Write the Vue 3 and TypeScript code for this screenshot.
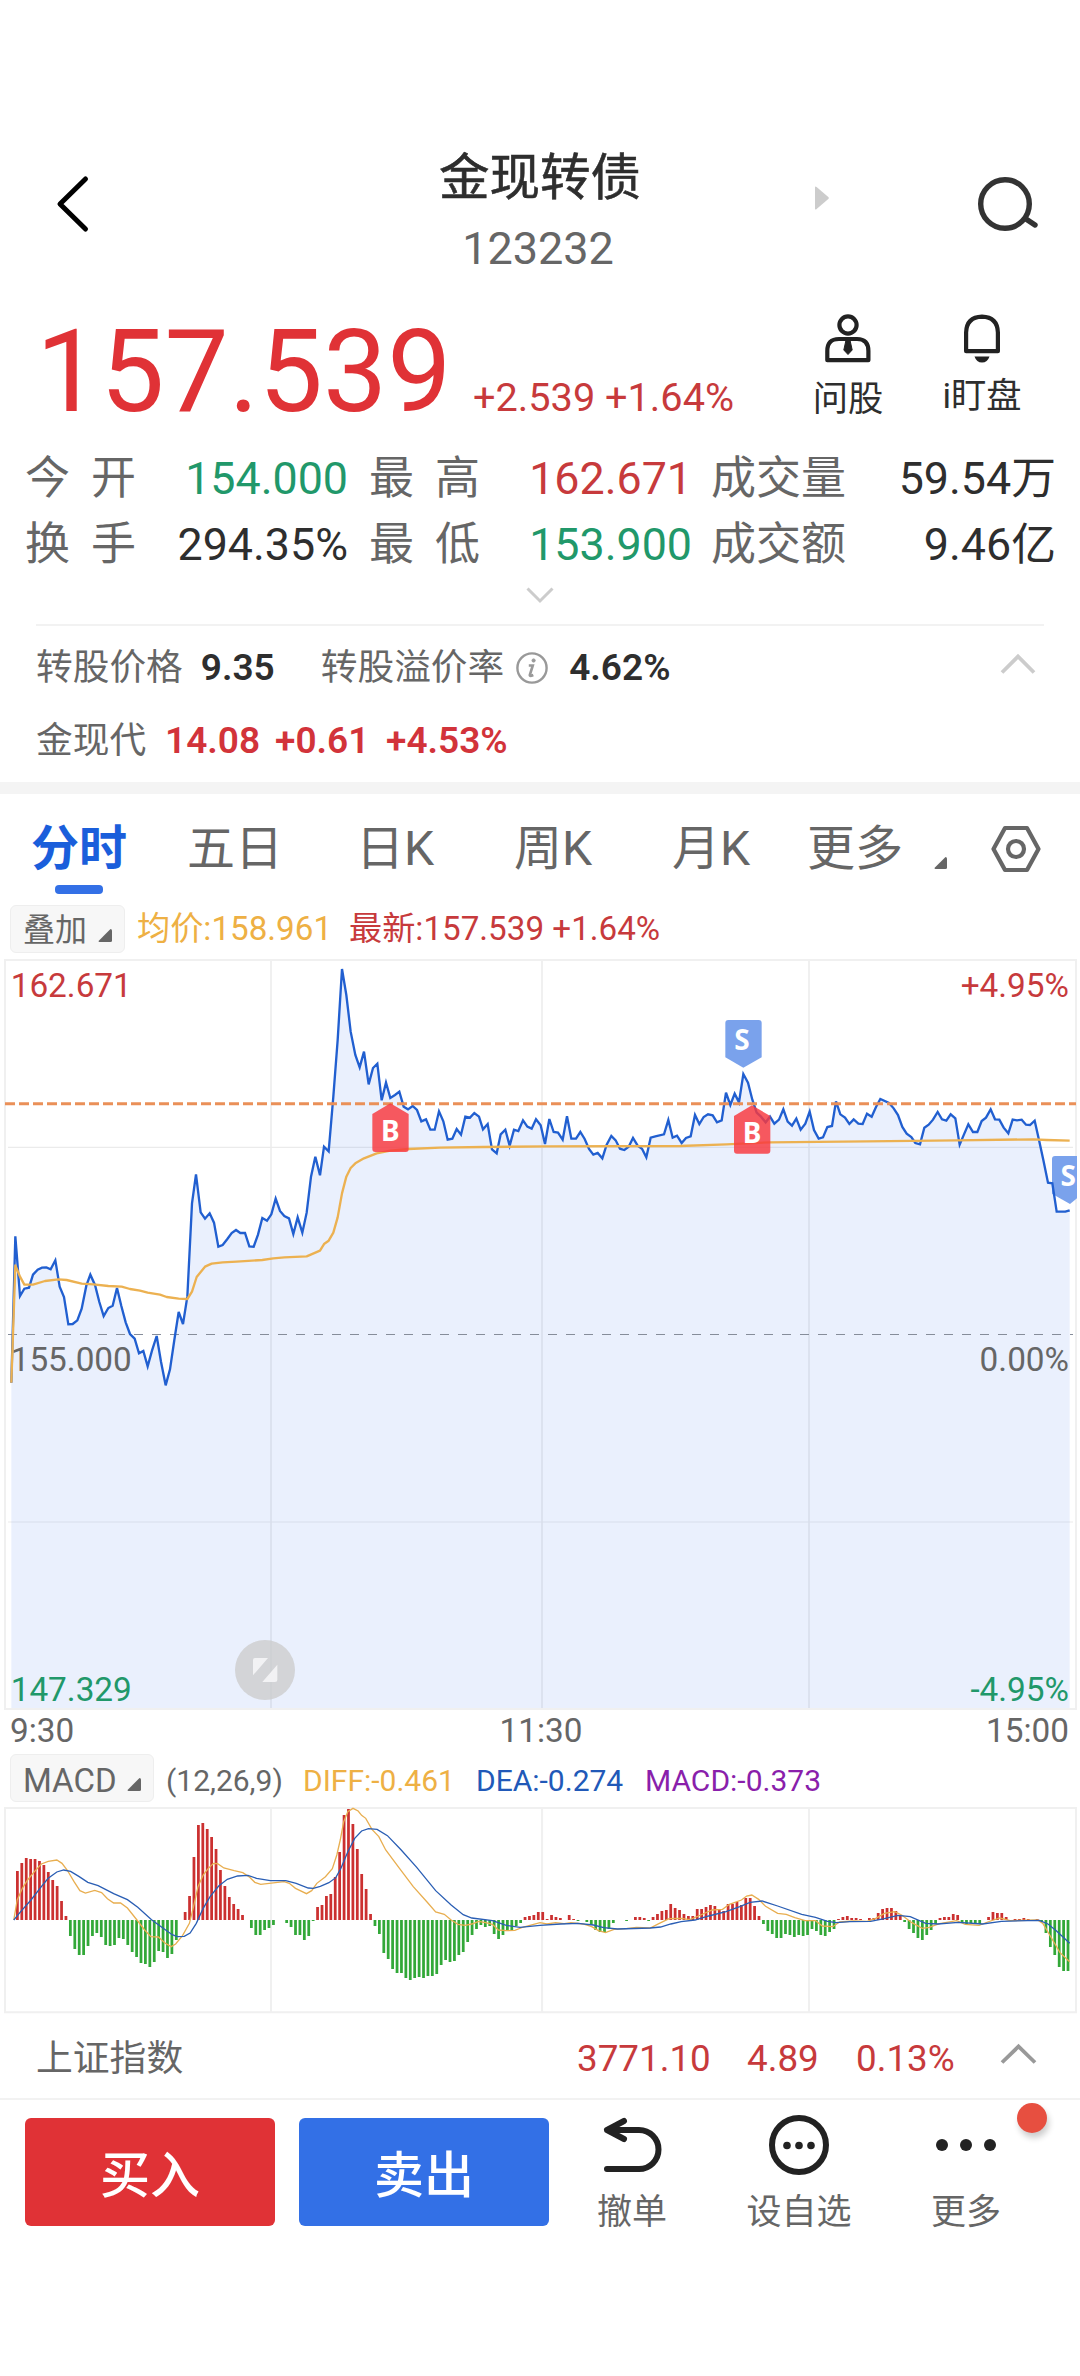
<script setup lang="ts">
interface Quote {
  label: string
  value: string
  tone: 'up' | 'down' | 'flat'
}

const quoteColumns: Quote[][] = [
  [
    { label: '今开', value: '154.000', tone: 'down' },
    { label: '换手', value: '294.35%', tone: 'flat' },
  ],
  [
    { label: '最高', value: '162.671', tone: 'up' },
    { label: '最低', value: '153.900', tone: 'down' },
  ],
  [
    { label: '成交量', value: '59.54万', tone: 'flat' },
    { label: '成交额', value: '9.46亿', tone: 'flat' },
  ],
]

const tabs: string[] = ['分时', '五日', '日K', '周K', '月K', '更多']

// Intraday price, chart units (three per pixel)
const price =
  '34,1328 46,889 60,1068 73,1046 87,1043 99,1004 113,989 126,983 139,982 152,988 166,961 179,1040 192,1071 205,1153 218,1152 232,1141 245,1106 259,1037 271,1004 285,1035 298,1086 311,1128 325,1104 338,1097 351,1044 364,1098 377,1147 390,1182 404,1196 417,1240 430,1233 443,1279 456,1232 470,1188 483,1265 497,1336 510,1288 523,1200 536,1116 549,1152 562,1070 576,790 588,703 602,817 615,836 629,820 642,848 655,920 668,915 682,897 695,879 708,870 721,879 735,879 748,919 761,920 774,884 787,834 801,842 814,823 827,776 840,813 853,828 867,835 880,882 893,832 907,878 920,818 933,710 946,650 960,706 972,620 986,634 1000,470 1013,300 1026,87 1039,165 ' +
  '1052,275 1066,345 1079,382 1092,335 1106,433 1119,384 1132,371 1145,481 1158,428 1171,474 1185,465 1198,455 1211,500 1224,508 1238,498 1251,510 1264,544 1278,538 1291,569 1304,569 1317,514 1330,544 1343,599 1357,596 1370,567 1383,584 1396,530 1410,533 1423,519 1437,530 1449,568 1463,552 1476,628 1490,640 1502,583 1516,569 1529,617 1542,569 1555,573 1569,541 1582,560 1595,566 1608,538 1622,556 1635,612 1648,537 1661,576 1674,578 1688,599 1701,529 1714,596 1728,596 1741,576 1754,597 1767,627 1780,644 1793,639 1807,655 1820,614 1834,588 1847,601 1860,626 1873,630 1886,620 1899,594 1913,617 1926,626 1939,652 1952,593 1966,589 1992,583 2005,540 2018,593 2031,587 2045,609 2058,594 2072,589 ' +
  '2085,525 2098,552 2111,531 2124,523 2138,526 2151,547 2165,541 2178,458 2191,495 2204,461 2217,487 2230,402 2244,428 2257,479 2270,518 2283,530 2297,547 2310,530 2323,551 2337,539 2350,508 2363,545 2376,557 2389,536 2402,569 2416,551 2429,515 2442,570 2456,596 2469,592 2482,561 2496,558 2508,484 2521,523 2535,533 2548,552 2561,538 2575,551 2588,552 2601,521 2615,530 2628,501 2641,477 2667,489 2681,505 2694,525 2707,561 2720,581 2734,591 2746,609 2760,613 2773,563 2786,554 2799,539 2813,516 2826,538 2839,542 2852,523 2866,535 2879,614 2892,583 2905,553 2919,576 2932,576 2945,543 2958,533 2972,508 2985,538 2998,539 3011,563 3025,580 3038,539 3051,541 3065,539 3078,554 3090,555 3104,542 3117,600 3130,660 3144,728 3157,730 3170,815 3196,815 3209,811'

const priceArea = `${price} 3209,2304 34,2304`

const average =
  '34,1328 46,976 60,1010 73,1034 99,1034 135,1023 175,1018 200,1020 245,1031 280,1033 325,1038 365,1040 390,1047 420,1052 443,1058 480,1064 500,1071 536,1076 562,1077 576,1055 590,1011 615,980 635,971 668,967 710,965 787,960 820,955 853,952 920,949 960,932 973,911 986,902 1000,878 1013,832 1026,760 1039,710 1052,684 1066,670 1092,655 1130,640 1171,632 1226,627 1320,623 1450,621 1640,619 2040,618 2180,613 2310,607 2600,604 2870,601 3100,598 3140,600 3209,602'

// MACD histogram, one value per minute
const histogram: number[] = [
  0, 147, 171, 186, 183, 183, 177, 165, 144, 120, 102, 57, 12,
  -48, -87, -105, -105, -78, -48, -39, -51, -75, -78, -75, -54, -57, -75, -96, -111, -129, -132, -141, -126, -93, -96, -114, -102, -60,
  0, 24, 72, 189, 285, 291, 273, 249, 213, 150, 102, 69, 48, 33, 15,
  0, -24, -45, -45, -30, -24, -15, 0, 0, -9, -21, -45, -45, -60, -48, -3,
  39, 45, 72, 78, 129, 204, 315, 333, 288, 213, 138, 93, 18,
  -18, -42, -99, -117, -147, -159, -159, -174, -180, -174, -171, -174, -168, -168, -162, -135, -120, -126, -123, -105, -96, -66, -45, -27, -15, -21, -18, -42, -57, -45, -30, -33, -18, -9,
  9, 12, 15, 24, 24, 3, 15, 9, 6, 0, 15, 3, -3, 0, -6, -15, -30, -36, -36, -27, -9, 0, 0, -3, 0,
  9, 9, 6, -3, 9, 18, 27, 30, 48, 36, 30, 18, 12, 12, 33, 33, 39, 45, 42, 30, 27, 48, 48, 54, 45, 66, 66, 42, 12,
  -12, -33, -42, -54, -54, -42, -45, -51, -45, -48, -45, -27, -33, -45, -48, -36, -27,
  3, 9, 12, 6, 6, 3, 0, 6, 6, 21, 33, 36, 36, 27, 15,
  -6, -27, -39, -54, -60, -45, -30, -12, 6, 9, 9, 18, 15, -9, -12, -9, -12, -12,
  0, 9, 24, 21, 21, 9, 0, 3, 3, 6, 3, 0, 3, -6, -39, -81, -105, -141, -153, -153,
]

const barPath = (sign: number): string =>
  histogram
    .map((v, i) => (v * sign > 0 ? `M${(33.7 + 12.818 * i).toFixed(1)} 390h8v${-v}h-8z` : ''))
    .join('')

const risingBars = barPath(1)
const fallingBars = barPath(-1)

const diff =
  '40,390 50,330 65,295 80,270 100,245 120,222 140,214 165,210 180,220 195,240 215,275 232,302 248,309 275,301 295,308 312,326 330,339 350,339 370,354 400,393 420,420 438,440 460,441 480,460 497,470 510,462 530,437 550,400 562,350 575,290 590,255 605,235 620,220 632,221 650,234 680,242 705,248 725,262 740,277 757,283 800,278 825,275 840,280 858,295 890,311 905,302 920,280 945,260 965,236 978,195 988,150 998,95 1010,65 1025,55 1040,63 1050,76 1062,85 1080,118 1100,140 1120,180 1160,235 1200,290 1240,336 1265,366 1290,373 1310,390 1330,403 1350,406 1370,402 1390,394 1410,398 1430,403 1447,420 1470,422 1495,421 1520,411 1568,398 ' +
  '1588,402 1613,398 1638,401 1658,398 1693,402 1718,410 1738,422 1758,428 1783,418 1818,416 1848,412 1888,414 1913,401 1943,386 1978,385 2003,389 2028,378 2068,360 2098,358 2118,343 2153,330 2168,318 2183,315 2203,328 2223,349 2258,370 2283,373 2308,383 2338,392 2368,392 2388,408 2418,410 2438,396 2478,393 2518,394 2543,385 2568,370 2598,365 2618,375 2648,398 2678,415 2698,412 2728,401 2778,392 2803,403 2843,406 2868,396 2903,384 2933,392 3013,390 3028,400 3048,435 3078,488 3106,515'

const dea =
  '40,390 60,365 90,330 120,290 140,265 165,246 185,240 205,244 230,260 255,277 285,287 330,311 370,329 400,352 440,389 470,412 500,434 515,440 535,439 552,429 570,400 590,355 610,320 635,288 660,268 690,258 720,256 745,265 785,272 830,272 860,280 895,294 910,295 930,289 955,278 975,263 990,235 1010,185 1030,145 1050,123 1070,116 1095,118 1125,137 1165,180 1210,232 1265,302 1310,345 1345,374 1370,384 1430,392 1470,406 1510,412 1568,406 ' +
  '1628,402 1678,400 1723,405 1753,413 1793,417 1888,414 1918,411 1948,402 1978,395 2018,390 2058,378 2108,365 2148,350 2178,337 2213,333 2258,348 2328,373 2368,382 2403,394 2428,398 2468,395 2528,394 2568,386 2608,376 2643,380 2688,400 2723,402 2783,397 2853,402 2908,394 3018,391 3043,402 3068,423 3106,460'
</script>

<template>
  <main class="page">
    <header class="head">
      <div class="head-left">
        <svg class="back" width="40" height="60" viewBox="0 0 40 60">
          <path d="M32.500 5 L7 30 L32.500 55" fill="none" stroke="#000" stroke-width="5" stroke-linecap="round" stroke-linejoin="round" />
        </svg>
      </div>
      <div class="head-title">
        <h1>金现转债</h1>
        <p>123232</p>
      </div>
      <div class="head-right">
        <svg class="next" width="14" height="24" viewBox="0 0 14 24"><path d="M0 1.500 Q0 -.3 1.600 1 L13.300 11 Q14.300 12 13.300 13 L1.600 23 Q0 24.300 0 22.500Z" fill="#ccc" /></svg>
        <svg class="search" width="64" height="58" viewBox="0 0 64 58" fill="none" stroke="#333" stroke-width="5.400">
          <circle cx="29" cy="29" r="24.300" />
          <path d="M50 44 L59 50" stroke-linecap="round" />
        </svg>
      </div>
    </header>

    <section class="price-block">
      <div class="price-line">
        <strong class="price">157.539</strong>
        <span class="change">+2.539 +1.64%</span>
      </div>
      <div class="action ask">
        <svg width="46" height="49" viewBox="0 0 46 49" fill="none" stroke="#222" stroke-width="4.200" stroke-linejoin="round">
          <circle cx="23" cy="11" r="8.600" />
          <path d="M2.300 46.200V37 Q2.300 25 14 25H32 Q43.400 25 43.400 37V46.200Z" />
          <path d="M20.800 27h4.400l2 9-4.200 4.500-4.200-4.500z" fill="#222" stroke="#222" stroke-width="1" />
        </svg>
        <span>问股</span>
      </div>
      <div class="action watch">
        <svg width="46" height="49" viewBox="0 0 46 49" fill="none" stroke="#222" stroke-width="4.200" stroke-linejoin="round">
          <path d="M7.100 37.200V18.500 Q7.600 3 23 2.600 Q38.400 3 38.900 18.500V37.200Z" />
          <path d="M15.500 42.500h15q-2 6-7.500 6t-7.500-6z" fill="#222" stroke="none" />
        </svg>
        <span>i盯盘</span>
      </div>
    </section>

    <section class="quotes">
      <div v-for="(column, c) in quoteColumns" :key="c" class="quote-column">
        <div v-for="q in column" :key="q.label" class="quote">
          <span class="quote-label" :class="{ spread: q.label.length === 2 }">{{ q.label }}</span>
          <span :class="q.tone">{{ q.value }}</span>
        </div>
      </div>
    </section>
    <div class="expand">
      <svg width="28" height="18" viewBox="0 0 28 18"><path d="M1.500 2.500 L14 15 L26.500 2.500" fill="none" stroke="#ccc" stroke-width="3" /></svg>
    </div>

    <section class="bond">
      <div class="bond-row">
        <span>转股价格</span><b class="b1">9.35</b>
        <span class="premium">转股溢价率</span>
        <svg class="info" width="32" height="32" viewBox="0 0 32 32" fill="none" stroke="#999" stroke-width="2.400">
          <circle cx="16" cy="16" r="14.600" />
          <circle cx="17.600" cy="8.500" r="1.600" fill="#999" stroke-width="1" />
          <path d="M12.800 13.500h4l-3 9.500q-.2 1.700 3.500 0" stroke-width="2.600" />
        </svg>
        <b class="b2">4.62%</b>
        <svg class="fold" width="36" height="22" viewBox="0 0 36 22"><path d="M2 19.500 L18 3.500 L34 19.500" fill="none" stroke="#ccc" stroke-width="3.800" /></svg>
      </div>
      <div class="bond-row stock">
        <span>金现代</span><b class="s1">14.08</b><b class="s2">+0.61</b><b>+4.53%</b>
      </div>
    </section>

    <nav class="tabs">
      <span v-for="(tab, i) in tabs" :key="tab" class="tab" :class="{ active: i === 0 }">{{ tab }}</span>
      <svg class="corner" width="13" height="12" viewBox="0 0 13 12"><path d="M11.500 0Q13 0 13 1.500V10.500Q13 12 11.500 12H1.500Q0 12 .7 10.700Z" fill="#666" /></svg>
      <svg width="50" height="48" viewBox="0 0 50 48" fill="none" stroke="#666" stroke-width="4.200" stroke-linejoin="round">
        <path d="M14 3H36L47.500 24L36 45H14L2.500 24Z" />
        <circle cx="25" cy="24" r="8" />
      </svg>
    </nav>

    <div class="legend">
      <span class="pill overlay">叠加<svg width="14" height="13" viewBox="0 0 14 13"><path d="M12.500 0Q14 0 14 1.500V11.500Q14 13 12.500 13H1.500Q0 13 .8 11.700Z" fill="#666" /></svg></span>
      <span class="avg">均价:158.961</span>
      <span class="last">最新:157.539 +1.64%</span>
    </div>

    <svg class="chart" width="1080" height="752" viewBox="0 57 3240 2256">
      <g stroke="#f0f0f0" stroke-width="6" fill="none">
        <path d="M15 60H3228V2307H15Z" />
        <path d="M813 60V2307M1626 60V2307M2427 60V2307" />
        <path d="M24 622H3219M24 1746H3219" stroke="#ebebeb" stroke-width="3.500" />
      </g>
      <polygon :points="priceArea" fill="#3370f0" fill-opacity=".1" />
      <path d="M24 1183.500H3219" stroke="#868d9a" stroke-width="3.300" stroke-dasharray="27 27" />
      <g font-size="100" fill="#666">
        <text x="32" y="170" fill="#c73a3c">162.671</text>
        <text x="3207" y="170" text-anchor="end" fill="#c73a3c">+4.95%</text>
        <text x="32" y="1292">155.000</text>
        <text x="3207" y="1292" text-anchor="end">0.00%</text>
        <text x="32" y="2283" fill="#21986a">147.329</text>
        <text x="3207" y="2283" text-anchor="end" fill="#21986a">-4.95%</text>
      </g>
      <path d="M2185 240H2276Q2285 240 2285 249V352L2230 383L2176 352V249Q2176 240 2185 240Z" fill="#7aa2ec" />
      <path d="M3165 648H3231V775L3210 792L3156 761V657Q3156 648 3165 648Z" fill="#7aa2ec" />
      <polyline :points="price" fill="none" stroke="#215fd0" stroke-width="7" />
      <polyline :points="average" fill="none" stroke="#ecb151" stroke-width="7" stroke-linejoin="round" />
      <path d="M15 491.500H3228" stroke="#ea9058" stroke-width="9" stroke-dasharray="30 12" />
      <g fill="#f8393e" fill-opacity=".83">
        <path d="M1171 490L1226 522V627Q1226 636 1217 636H1126Q1117 636 1117 627V522Z" />
        <path d="M2256 496L2311 528V632Q2311 641 2302 641H2211Q2202 641 2202 632V528Z" />
      </g>
      <g class="mark" fill="#fff" text-anchor="middle">
        <text x="1171" y="604">B</text>
        <text x="2256" y="609">B</text>
        <text x="2226" y="330">S</text>
        <text x="3205" y="739">S</text>
      </g>
      <circle cx="795" cy="2190" r="90" fill="#ccc" fill-opacity=".78" />
      <path d="M765 2154H804L759 2206V2160Q759 2154 765 2154ZM825 2226H787L832 2174V2220Q832 2226 825 2226Z" fill="#f2f2f4" />
    </svg>

    <div class="times"><span>9:30</span><span>11:30</span><span>15:00</span></div>

    <div class="legend indicator">
      <span class="pill macd">MACD<svg width="14" height="13" viewBox="0 0 14 13"><path d="M12.500 0Q14 0 14 1.500V11.500Q14 13 12.500 13H1.500Q0 13 .8 11.700Z" fill="#666" /></svg></span>
      <span class="params">(12,26,9)</span>
      <span class="diff">DIFF:-0.461</span>
      <span class="dea">DEA:-0.274</span>
      <span class="hist">MACD:-0.373</span>
    </div>

    <svg class="chart" width="1080" height="208" viewBox="0 48 3136 624" preserveAspectRatio="none">
      <g fill="none" stroke="#f0f0f0" stroke-width="2">
        <path vector-effect="non-scaling-stroke" d="M14.500 54H3124.500V667H14.500Z" />
        <path vector-effect="non-scaling-stroke" d="M787 54V667M1574 54V667M2349 54V667" />
      </g>
      <path :d="risingBars" fill="#cb3030" />
      <path :d="fallingBars" fill="#32a838" />
      <polyline vector-effect="non-scaling-stroke" :points="diff" fill="none" stroke="#e8ae50" stroke-width="1.300" />
      <polyline vector-effect="non-scaling-stroke" :points="dea" fill="none" stroke="#2a5eb4" stroke-width="1.300" />
    </svg>

    <section class="index">
      <span class="index-name">上证指数</span>
      <span class="i1">3771.10</span><span class="i2">4.89</span><span class="i3">0.13%</span>
      <svg width="37" height="22" viewBox="0 0 37 22"><path d="M2 19.500 L18.500 3.500 L35 19.500" fill="none" stroke="#999" stroke-width="3.800" /></svg>
    </section>

    <footer class="bar">
      <button class="trade buy">买入</button>
      <button class="trade sell">卖出</button>
      <div class="tool undo">
        <svg width="60" height="60" viewBox="0 0 60 60" fill="none" stroke="#222" stroke-width="6" stroke-linecap="round" stroke-linejoin="round">
          <path d="M22 6L5 15L22 24M5 15H37A19.500 19.500 0 0 1 37 54H5" />
        </svg>
        <span>撤单</span>
      </div>
      <div class="tool fav">
        <svg width="60" height="60" viewBox="0 0 60 60" fill="#222">
          <circle cx="30" cy="30" r="27" fill="none" stroke="#222" stroke-width="6" />
          <circle cx="18" cy="30.500" r="3.800" /><circle cx="30" cy="30.500" r="3.800" /><circle cx="42" cy="30.500" r="3.800" />
        </svg>
        <span>设自选</span>
      </div>
      <div class="tool more">
        <svg width="60" height="60" viewBox="0 0 60 60" fill="#222">
          <circle cx="6" cy="30" r="6" /><circle cx="30" cy="30" r="6" /><circle cx="54" cy="30" r="6" />
        </svg>
        <span>更多</span>
        <i class="dot"></i>
      </div>
    </footer>
  </main>
</template>

<style>
body {
  margin: 0;
  background: #fff;
}
</style>

<style scoped>
.page {
  width: 1080px;
  height: 2376px;
  overflow: hidden;
  box-sizing: border-box;
  padding-top: 140px;
  background: #fff;
  color: #666;
  font-family: Roboto, "Noto Sans CJK SC", sans-serif;
  white-space: nowrap;
}
svg {
  display: block;
  flex: none;
}
.head {
  height: 150px;
  display: grid;
  grid-template-columns: 370px 340px 370px;
}
.back {
  margin: 34px 0 0 53px;
}
.head-title {
  padding-top: 8px;
  text-align: center;
}
h1 {
  margin: 0;
  font-size: 50.5px;
  font-weight: 400;
  line-height: 60px;
  color: #2e2e2e;
  -webkit-text-stroke: 0.6px #2e2e2e;
}
.head-title p {
  margin: 11px 0 0;
  padding-right: 4px;
  font-size: 45px;
  line-height: 60px;
}
.head-right {
  display: flex;
  align-items: flex-start;
}
.next {
  margin: 46px 0 0 105px;
}
.search {
  margin: 35px 0 0 147px;
}
.price-block {
  height: 156px;
  display: flex;
}
.price-line {
  width: 795px;
  box-sizing: border-box;
  padding: 22px 0 0 36px;
  line-height: 120px;
}
.price {
  display: inline-block;
  width: 437px;
  font-size: 114.3px;
  font-weight: 400;
  color: #e03236;
}
.change {
  font-size: 39.7px;
  color: #c73a3c;
}
.action {
  display: flex;
  flex-direction: column;
  align-items: center;
  padding-top: 24px;
  width: 106px;
  font-size: 35.3px;
  line-height: 40px;
  color: #2e2e2e;
}
.action span {
  margin-top: 16px;
}
.watch {
  margin-left: 28px;
}
.watch span {
  margin-top: 13px;
}
.quotes {
  display: flex;
  padding-left: 25px;
  font-size: 44.8px;
}
.quote-column {
  width: 323px;
  margin-right: 21px;
}
.quote-column:last-child {
  width: 345px;
  margin: 0 0 0 -2px;
}
.quote {
  display: flex;
  justify-content: space-between;
  height: 66px;
  line-height: 66px;
}
.quote-label {
  font-size: 45px;
}
.spread {
  letter-spacing: 21px;
}
.up {
  color: #c73a3c;
}
.down {
  color: #21986a;
}
.flat {
  color: #2e2e2e;
}
.expand {
  display: flex;
  justify-content: center;
  height: 38px;
  padding-top: 8px;
}
.bond {
  height: 151px;
  margin: 0 36px;
  padding-top: 5px;
  border-top: 2px solid #f2f2f2;
  font-size: 36.7px;
}
.bond-row {
  display: flex;
  align-items: center;
  height: 73px;
  line-height: 73px;
}
.bond b {
  font-weight: 600;
  font-size: 37px;
  color: #2e2e2e;
}
.bond .b1 {
  width: 120px;
  margin-left: 18px;
}
.info {
  margin-left: 12px;
}
.bond .b2 {
  margin-left: 21px;
}
.fold {
  margin: -8px 8px 0 auto;
}
.bond .stock b {
  color: #d2333a;
}
.stock .s1 {
  width: 110px;
  margin-left: 19px;
}
.stock .s2 {
  width: 111px;
}
.tabs {
  display: grid;
  grid-template-columns: 156px 169px 158px 158px 135px 127px 57px 50px;
  align-items: center;
  height: 109px;
  padding-left: 31px;
  border-top: 12px solid #f4f4f4;
  font-size: 48px;
  line-height: 110px;
}
.tab.active {
  position: relative;
  font-weight: 700;
  color: #1a5edb;
}
.tab.active::after {
  content: '';
  position: absolute;
  left: 24px;
  bottom: 10px;
  width: 48px;
  height: 9px;
  border-radius: 4px;
  background: #3370e6;
}
.corner {
  margin-top: 28px;
}
.legend {
  display: flex;
  align-items: center;
  height: 52px;
  padding: 0 0 4px 10px;
  font-size: 33.2px;
  line-height: 52px;
}
.pill {
  display: flex;
  align-items: center;
  justify-content: space-between;
  box-sizing: border-box;
  height: 48px;
  padding: 3px 12px 0;
  border: 1px solid #eee;
  border-radius: 6px;
  background: #f7f7f7;
  line-height: 43px;
}
.pill svg {
  margin-top: 9px;
}
.overlay {
  width: 115px;
  font-size: 32px;
}
.avg {
  width: 212px;
  margin-left: 12px;
  color: #eeb044;
}
.last {
  color: #c73a3c;
}
.chart {
  font-family: Roboto, sans-serif;
}
.mark {
  font: 700 84px "Noto Sans", sans-serif;
}
.times {
  display: grid;
  grid-template-columns: 1fr 1fr 1fr;
  height: 39px;
  padding: 0 11px 0 10px;
  font-size: 33.3px;
  line-height: 39px;
}
.times span:nth-child(2) {
  text-align: center;
  padding-left: 3px;
}
.times span:nth-child(3) {
  text-align: right;
}
.indicator {
  padding: 2px 0 2px 10px;
  font-size: 30px;
}
.macd {
  width: 144px;
  padding-top: 4px;
  font-size: 33px;
}
.indicator > span:not(.pill) {
  padding-top: 5px;
}
.params {
  width: 137px;
  margin-left: 12px;
}
.diff {
  width: 173px;
  color: #eeb044;
}
.dea {
  width: 169px;
  color: #2159b8;
}
.hist {
  color: #8a1fab;
}
.index {
  display: flex;
  align-items: center;
  height: 84px;
  padding-left: 36px;
  border-bottom: 2px solid #f2f2f2;
  font-size: 36.8px;
  line-height: 84px;
  color: #c73a3c;
}
.index span {
  padding-top: 5px;
}
.index .index-name {
  width: 541px;
  color: #666;
}
.i1 {
  width: 170px;
}
.i2 {
  width: 109px;
}
.i3 {
  width: 144px;
}
.index svg {
  margin-top: -4px;
}
.bar {
  display: flex;
  padding: 18px 0 0 25px;
}
.trade {
  width: 250px;
  height: 108px;
  margin: 0 24px 0 0;
  padding: 2px 0 0;
  border: 0;
  border-radius: 6px;
  font: 500 50px/112px Roboto, "Noto Sans CJK SC", sans-serif;
  color: #fff;
}
.buy {
  background: #e03236;
}
.sell {
  background: #3370e6;
}
.tool {
  position: relative;
  display: flex;
  flex-direction: column;
  align-items: center;
  width: 120px;
  margin-top: -3px;
  font-size: 35px;
  line-height: 44px;
}
.tool span {
  margin-top: 16px;
}
.undo {
  margin-left: -1px;
}
.fav {
  margin-left: 47px;
}
.more {
  margin-left: 47px;
}
.dot {
  position: absolute;
  left: 111px;
  top: -12px;
  width: 30px;
  height: 30px;
  border-radius: 50%;
  background: #e74f40;
  box-shadow: 2px 5px 6px rgba(0, 0, 0, 0.2);
}
</style>
